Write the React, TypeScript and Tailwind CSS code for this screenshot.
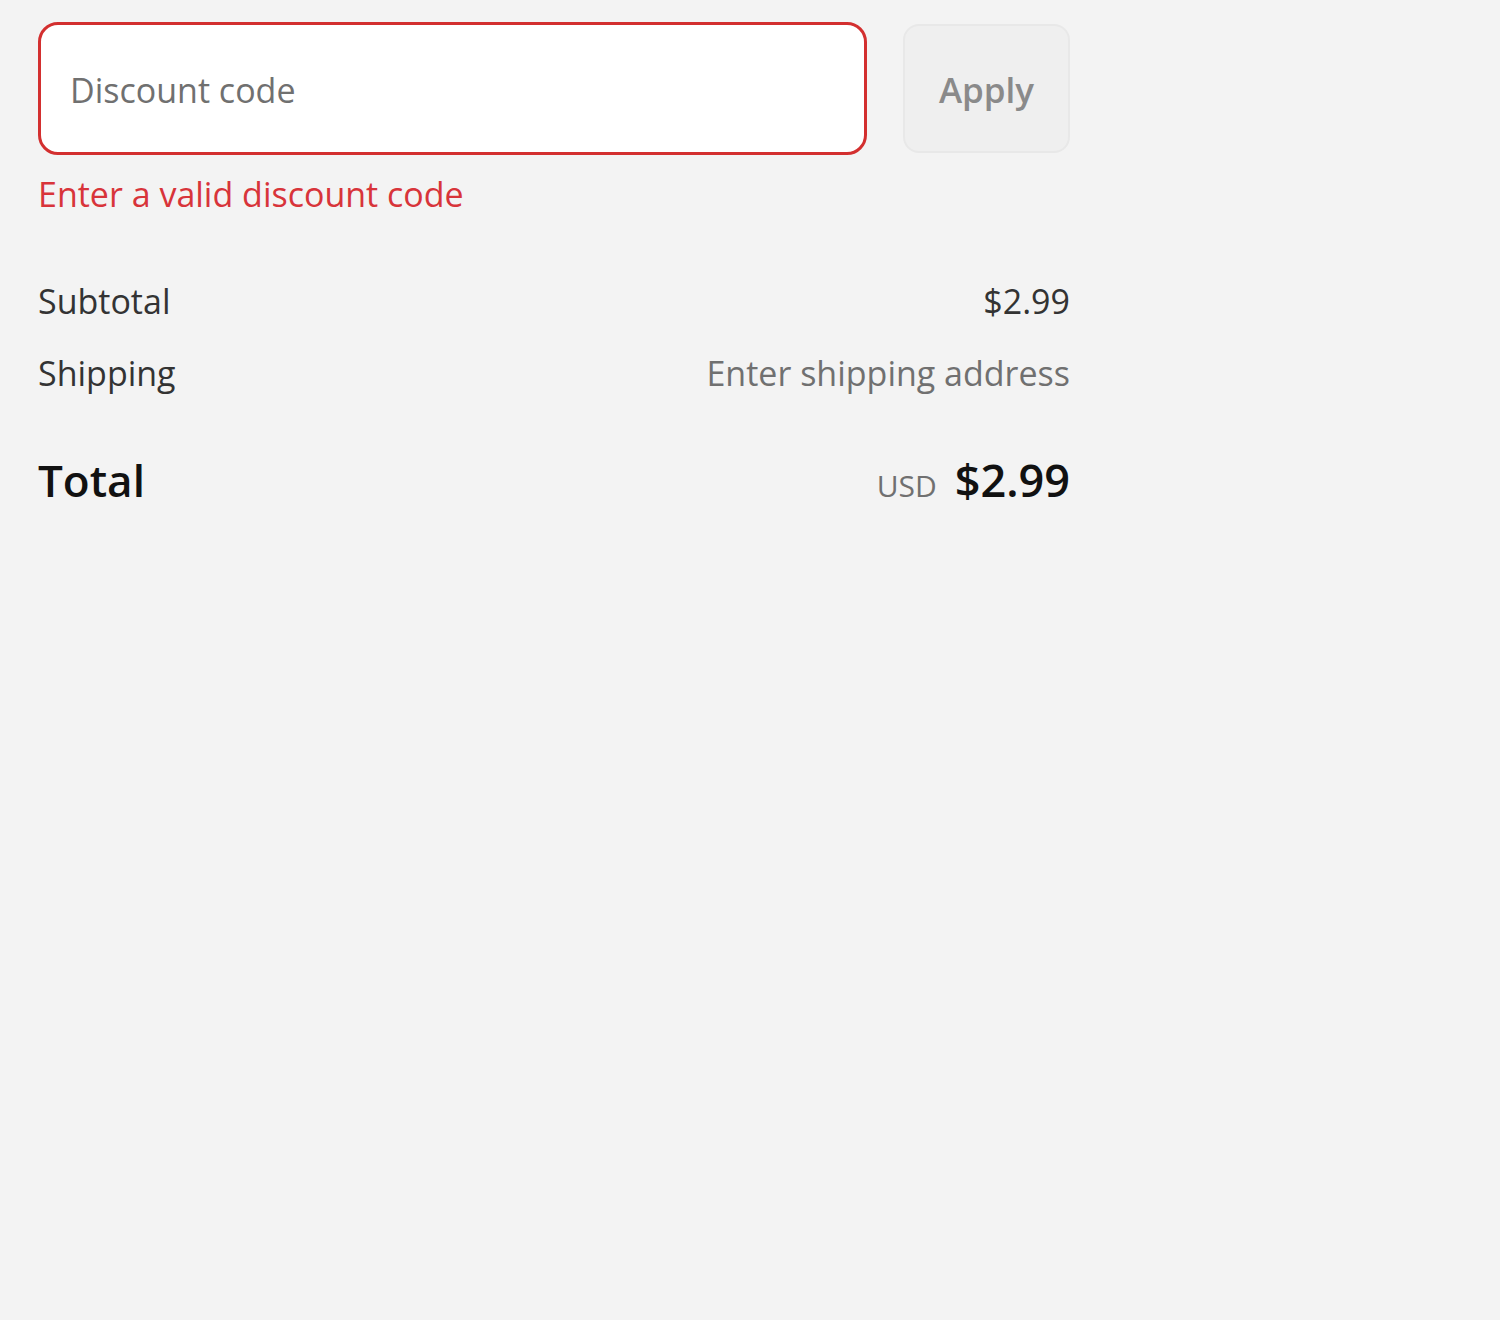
import React, { useState } from 'react';

const font = { fontFamily: '"Open Sans", "Noto Sans", sans-serif' };

const App: React.FC = () => {
  const [code, setCode] = useState('');

  return (
    <div className="min-h-screen bg-[#f3f3f3]" style={font}>
      <div className="w-[1032px] ml-[38px] pt-[22px]">
        {/* Discount code */}
        <div className="flex items-center gap-[36px]">
          <input
            type="text"
            value={code}
            onChange={(e) => setCode(e.target.value)}
            placeholder="Discount code"
            className="flex-1 h-[133px] rounded-[20px] border-[3px] border-[#d32f2f] bg-white px-[29px] pt-[3px] text-[34px] text-[#333] placeholder:text-[#707070] outline-none"
          />
          <button
            type="button"
            className="w-[167px] h-[129px] rounded-[16px] border-2 border-[#e8e8e8] bg-[#efefef] pt-[3px] text-[35px] font-semibold text-[#8a8a8a]"
          >
            Apply
          </button>
        </div>
        <p className="mt-[18px] text-[34px] leading-[42px] text-[#d8343a]">Enter a valid discount code</p>

        {/* Totals */}
        <div className="mt-[62px] flex flex-col gap-[24px] text-[34px] leading-[48px]">
          <div className="flex justify-between text-[#333]">
            <span>Subtotal</span>
            <span>$2.99</span>
          </div>
          <div className="flex justify-between">
            <span className="text-[#333]">Shipping</span>
            <span className="text-[#707070]">Enter shipping address</span>
          </div>
        </div>
        <div className="mt-[49px] flex items-baseline justify-between">
          <span className="text-[44px] font-semibold text-[#111]">Total</span>
          <span className="flex items-baseline gap-[18px]">
            <span className="text-[30px] text-[#707070]">USD</span>
            <span className="text-[45px] font-semibold text-[#111]">$2.99</span>
          </span>
        </div>
      </div>
    </div>
  );
};

export default App;
